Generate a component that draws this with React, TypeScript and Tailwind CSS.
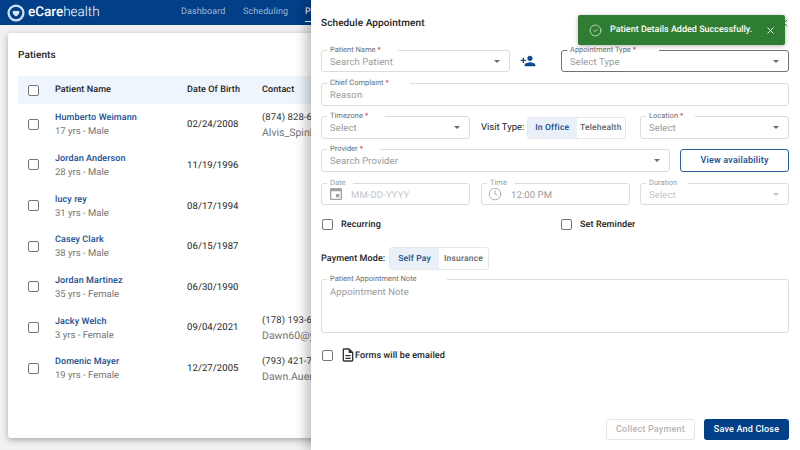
import { X, CircleCheck, Clock } from 'lucide-react';

const patients = [
  { name: 'Humberto Weimann', meta: '17 yrs - Male', dob: '02/24/2008', phone: '(874) 828-6690', email: 'Alvis_Spinka@gmail.com' },
  { name: 'Jordan Anderson', meta: '28 yrs - Male', dob: '11/19/1996' },
  { name: 'lucy rey', meta: '31 yrs - Male', dob: '08/17/1994' },
  { name: 'Casey Clark', meta: '38 yrs - Male', dob: '06/15/1987' },
  { name: 'Jordan Martinez', meta: '35 yrs - Female', dob: '06/30/1990' },
  { name: 'Jacky Welch', meta: '3 yrs - Female', dob: '09/04/2021', phone: '(178) 193-6541', email: 'Dawn60@yahoo.com' },
  { name: 'Domenic Mayer', meta: '19 yrs - Female', dob: '12/27/2005', phone: '(793) 421-7112', email: 'Dawn.Auer@gmail.com' },
];

function Caret({ disabled }: { disabled?: boolean }) {
  return (
    <svg width="6" height="3" viewBox="0 0 8 4" className="shrink-0">
      <path d="M0 0h8L4 4z" fill={disabled ? '#c4c4c4' : '#6b6b6b'} />
    </svg>
  );
}

function Box({ className = '' }: { className?: string }) {
  return <span className={`block h-[11px] w-[11px] shrink-0 rounded-[2px] border-[1.5px] border-[#757575] bg-white ${className}`} />;
}

function Field({
  label,
  required,
  notch,
  className,
  active,
  muted,
  children,
}: {
  label: string;
  required?: boolean;
  notch: string;
  className: string;
  active?: boolean;
  muted?: boolean;
  children: React.ReactNode;
}) {
  return (
    <div className={`relative flex items-center rounded-[3px] border bg-white pl-[8px] pr-[9px] ${active ? 'border-[#6f7479]' : 'border-[#dcdcdc]'} ${className}`}>
      <span className={`absolute -top-[6px] left-[5px] bg-white pl-[3px] text-[7.5px] leading-[10px] whitespace-nowrap ${notch} ${muted ? 'text-[#9e9e9e]' : 'text-[#6e6e6e]'}`}>
        {label}
        {required && <span className="ml-[2px] text-[#d32f2f]">*</span>}
      </span>
      {children}
    </div>
  );
}

function Placeholder({ text, light }: { text: string; light?: boolean }) {
  return <span className={`flex-1 pt-[3px] text-[9.5px] leading-[12px] tracking-[0.1px] ${light ? 'text-[#c6c6c6]' : 'text-[#9a9a9a]'}`}>{text}</span>;
}

function Segmented({ left, right, className }: { left: string; right: string; className: string }) {
  return (
    <div className={`flex rounded-[3px] border border-[#e8e8e8] text-[8.5px] font-medium tracking-[0.2px] ${className}`}>
      <span className="flex w-1/2 items-center justify-center rounded-l-[3px] bg-[#e9f0f8] pt-[1px] text-[#0f4c8f]">{left}</span>
      <span className="flex w-1/2 items-center justify-center pt-[1px] text-[#5f6368]">{right}</span>
    </div>
  );
}

export default function App() {
  return (
    <div className="relative h-[450px] w-[800px] overflow-hidden bg-[#f1f1f1] font-['Roboto',sans-serif] text-[#212121] [text-rendering:geometricPrecision]">
      {/* Top bar */}
      <header className="flex h-[25px] items-center bg-[#013f88] pl-[7px]">
        <svg width="18" height="18" viewBox="0 0 18 18" className="shrink-0">
          <circle cx="9" cy="9" r="7.4" fill="none" stroke="#cfe0f2" strokeWidth="2.4" />
          <path d="M5.500 7.800c.9-1.300 2.600-1.500 3.500-.6.9-.9 2.600-.7 3.500.6 0 2.500-2.200 3.900-3.500 4.700-1.300-.8-3.500-2.200-3.500-4.700z" fill="#dfe9f4" />
        </svg>
        <span className="ml-[3px] w-[153px] text-[13.5px] leading-none text-white">
          <span className="font-medium">eCare</span>
          <span className="font-light">health</span>
        </span>
        <nav className="flex text-[9px] tracking-[0.1px] text-[#9db8d8]">
          <span className="w-[62px]">Dashboard</span>
          <span className="w-[62px]">Scheduling</span>
          <span className="relative text-white">
            Patients
            <span className="absolute -bottom-[3px] left-0 h-px w-full bg-white" />
          </span>
        </nav>
      </header>

      {/* Patients card */}
      <main className="mx-[8px] mt-[8px] h-[405px] rounded-[3px] bg-white pl-[10px] pt-[16px] shadow-[0_2px_6px_rgba(0,0,0,0.3)]">
        <h1 className="text-[10px] font-medium leading-[14px] tracking-[0.1px]">Patients</h1>
        <div className="mt-[13px] flex h-[28px] items-center bg-[#eff5fc] pl-[10px] text-[9px] font-medium tracking-[0.1px]">
          <Box />
          <span className="ml-[16px] w-[132px] pt-[2px]">Patient Name</span>
          <span className="w-[75px] pt-[2px]">Date Of Birth</span>
          <span className="pt-[2px]">Contact</span>
        </div>
        {patients.map((p) => (
          <div key={p.name} className="flex h-[40.67px] items-center pl-[10px]">
            <Box />
            <div className="ml-[16px] w-[132px] pt-[2px]">
              <div className="text-[9px] font-medium leading-[14px] tracking-[0.1px] text-[#1a4f8f]">{p.name}</div>
              <div className="text-[9.5px] leading-[14px] text-[#757575]">{p.meta}</div>
            </div>
            <span className="w-[75px] pt-[2px] text-[9.5px] tracking-[0.1px]">{p.dob}</span>
            {p.phone && (
              <div className="w-[49px] overflow-hidden whitespace-nowrap pt-[2px]">
                <div className="text-[9.5px] leading-[15px] tracking-[0.1px] text-[#333]">{p.phone}</div>
                <div className="text-[10.5px] leading-[16px] text-[#757575]">{p.email}</div>
              </div>
            )}
          </div>
        ))}
      </main>

      {/* Schedule drawer */}
      <aside className="absolute inset-y-0 right-0 flex w-[489px] flex-col bg-white pl-[10px] pr-[11px] shadow-[-4px_0_12px_rgba(0,0,0,0.28)]">
        <div className="flex h-[45px] items-center justify-between">
          <h2 className="pt-[2px] text-[10px] font-medium tracking-[0.1px]">Schedule Appointment</h2>
          <X size={12} strokeWidth={1.6} className="text-[#444] -mr-[1px]" />
        </div>

        <div className="mt-[5px] flex items-center">
          <Field label="Patient Name" required notch="pr-[17px]" className="h-[22px] w-[189px]">
            <Placeholder text="Search Patient" />
            <Caret />
          </Field>
          <svg width="16" height="16" viewBox="0 0 24 24" fill="#0f4c8f" className="ml-[10px] shrink-0">
            <path d="M15 12c2.210 0 4-1.790 4-4s-1.790-4-4-4-4 1.790-4 4 1.790 4 4 4zm-9-2V7H4v3H1v2h3v3h2v-3h3v-2H6zm9 4c-2.670 0-8 1.340-8 4v2h16v-2c0-2.660-5.330-4-8-4z" />
          </svg>
          <Field label="Appointment Type" required active notch="pr-[23px]" className="ml-[25px] h-[22px] flex-1">
            <Placeholder text="Select Type" />
            <Caret />
          </Field>
        </div>

        <Field label="Chief Complaint" required notch="pr-[21px]" className="mt-[11px] h-[23px]">
          <Placeholder text="Reason" />
        </Field>

        <div className="mt-[10px] flex items-center">
          <Field label="Timezone" required notch="pr-[17px]" className="h-[23px] w-[149px]">
            <Placeholder text="Select" />
            <Caret />
          </Field>
          <span className="ml-[11px] w-[46px] pt-[2px] text-[9.5px]">Visit Type:</span>
          <Segmented left="In Office" right="Telehealth" className="h-[22px] w-[99px]" />
          <Field label="Location" required notch="pr-[12px]" className="ml-[14px] h-[23px] flex-1">
            <Placeholder text="Select" />
            <Caret />
          </Field>
        </div>

        <div className="mt-[10px] flex">
          <Field label="Provider" required notch="pr-[17px]" className="h-[23px] w-[349px]">
            <Placeholder text="Search Provider" />
            <Caret />
          </Field>
          <button className="ml-[10px] h-[23px] flex-1 rounded-[3px] border border-[#2f5f99] pt-[1px] text-[9px] font-medium tracking-[0.2px] text-[#0f4c8f]">
            View availability
          </button>
        </div>

        <div className="mt-[11px] flex">
          <Field label="Date" muted notch="pr-[8px]" className="h-[22px] w-[149px]">
            <svg width="16" height="16" viewBox="0 0 24 24" fill="#a3a3a3" className="-ml-[2px] mr-[7px] shrink-0">
              <path d="M17 12h-5v5h5v-5zM16 1v2H8V1H6v2H5c-1.110 0-1.990.9-1.990 2L3 19c0 1.100.89 2 2 2h14c1.100 0 2-.9 2-2V5c0-1.100-.9-2-2-2h-1V1h-2zm3 18H5V8h14v11z" />
            </svg>
            <Placeholder text="MM-DD-YYYY" light />
          </Field>
          <Field label="Time" muted notch="pr-[8px]" className="ml-[11px] h-[22px] w-[149px]">
            <Clock size={14} strokeWidth={1.3} className="-ml-[2px] mr-[9px] text-[#9a9a9a]" />
            <Placeholder text="12:00 PM" />
          </Field>
          <Field label="Duration" muted notch="pr-[11px]" className="ml-[10px] h-[22px] flex-1">
            <Placeholder text="Select" light />
            <Caret disabled />
          </Field>
        </div>

        <div className="mt-[12px] flex h-[14px] items-center text-[9px] font-medium tracking-[0.1px]">
          <Box className="ml-[1px]" />
          <span className="ml-[8px] w-[220px] pt-[3px]">Recurring</span>
          <Box />
          <span className="ml-[8px] pt-[3px]">Set Reminder</span>
        </div>

        <div className="mt-[16px] flex items-center">
          <span className="w-[68px] pt-[2px] text-[9px] font-medium tracking-[0.1px]">Payment Mode:</span>
          <Segmented left="Self Pay" right="Insurance" className="h-[23px] w-[100px]" />
        </div>

        <div className="relative mt-[9px] h-[54px] rounded-[3px] border border-[#dcdcdc] pl-[8px] pt-[7px]">
          <span className="absolute -top-[6px] left-[5px] bg-white pl-[3px] pr-[30px] text-[7.5px] leading-[10px] text-[#6e6e6e]">
            Patient Appointment Note
          </span>
          <div className="text-[9.5px] leading-[12px] tracking-[0.1px] text-[#9a9a9a]">Appointment Note</div>
        </div>

        <div className="mt-[15px] flex h-[14px] items-center text-[9px] font-medium tracking-[0.1px]">
          <Box className="ml-[1px]" />
          <svg width="16" height="16" viewBox="0 0 24 24" fill="#333" className="ml-[7px] shrink-0">
            <path d="M8 16h8v2H8zm0-4h8v2H8zm6-10H6c-1.100 0-2 .9-2 2v16c0 1.100.89 2 1.990 2H18c1.100 0 2-.9 2-2V8l-6-6zm4 18H6V4h7v5h5v11z" />
          </svg>
          <span className="-ml-[1px] pt-[3px]">Forms will be emailed</span>
        </div>

        <div className="mt-auto mb-[10px] flex justify-end">
          <button className="h-[21px] w-[89px] rounded-[3px] border border-[#e4e4e4] pt-[1px] text-[9px] font-medium tracking-[0.2px] text-[#b5b5b5]">
            Collect Payment
          </button>
          <button className="ml-[9px] h-[21px] w-[85px] rounded-[3px] bg-[#013f88] pt-[1px] text-[9px] font-medium tracking-[0.2px] text-white">
            Save And Close
          </button>
        </div>
      </aside>

      {/* Toast */}
      <div className="absolute left-[578px] top-[15px] flex h-[30px] w-[207px] items-center rounded-[2px] bg-[#2e7d32] pl-[11px] pr-[9px] text-white shadow-[0_1px_4px_rgba(0,0,0,0.3)]">
        <CircleCheck size={13} strokeWidth={1.5} className="text-[#d7ebd8]" />
        <span className="ml-[8px] flex-1 pt-[2px] text-[9px] font-medium">Patient Details Added Successfully.</span>
        <X size={11} strokeWidth={2} />
      </div>
    </div>
  );
}
